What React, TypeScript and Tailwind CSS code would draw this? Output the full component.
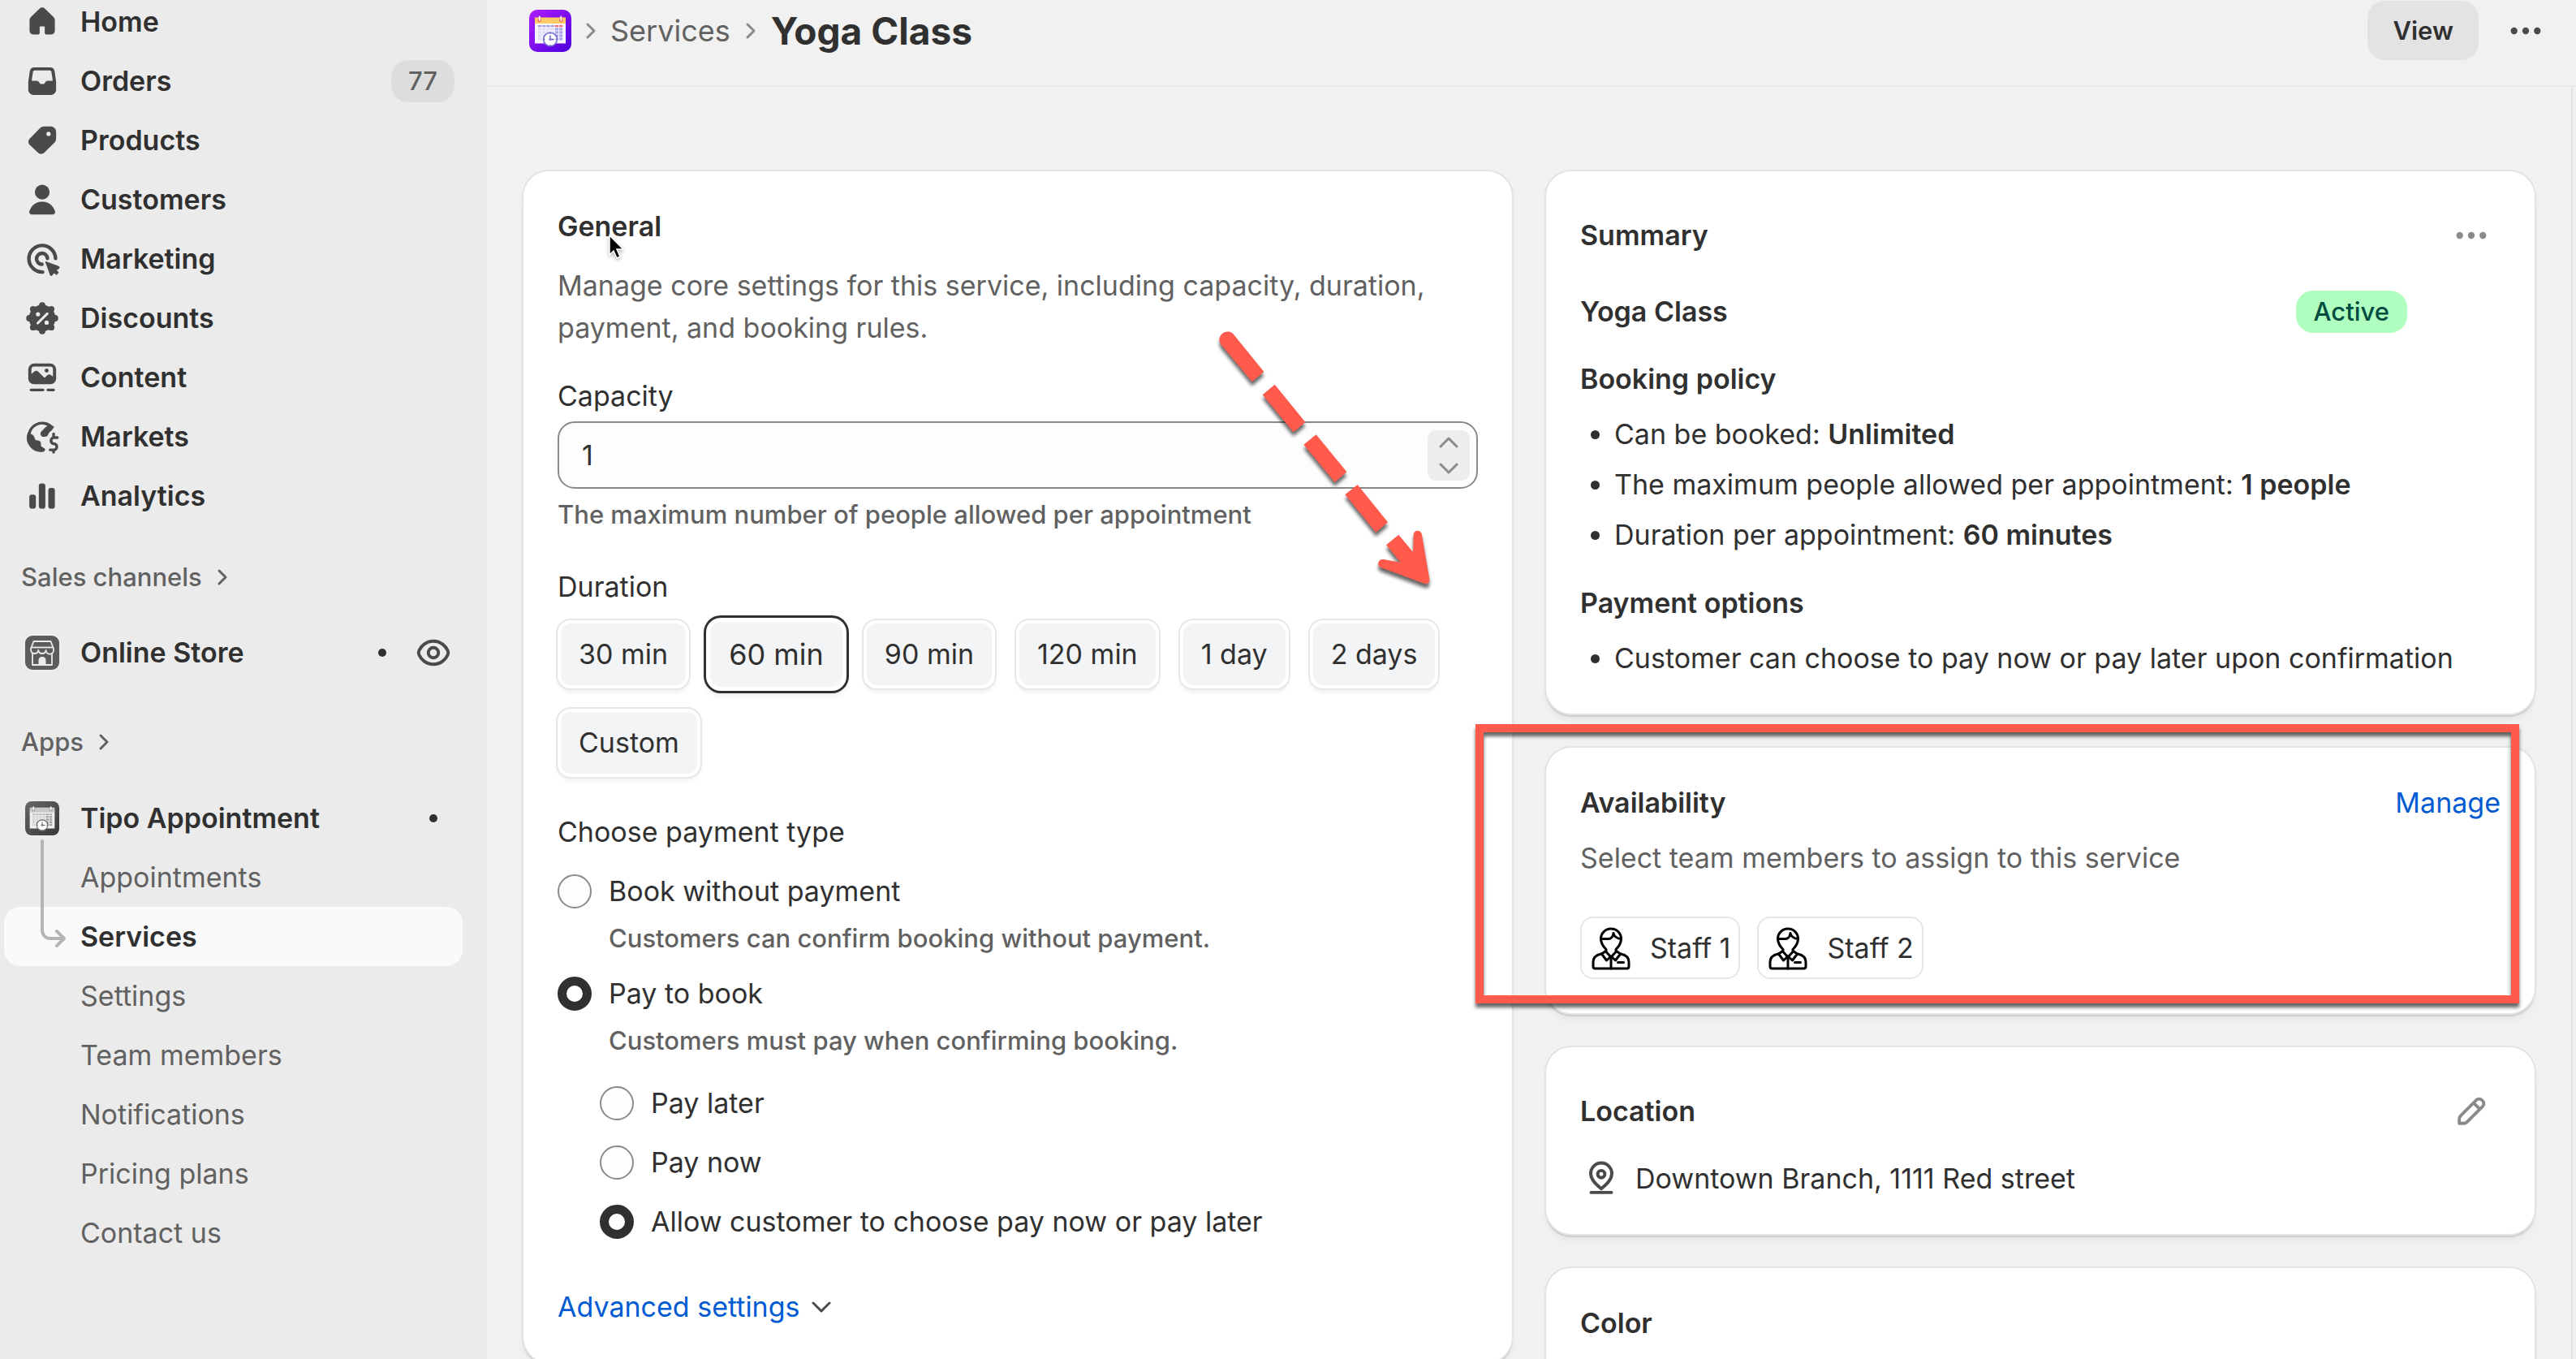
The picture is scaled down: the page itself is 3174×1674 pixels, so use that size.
import React, { useState } from 'react';

const DURATIONS = ['30 min', '60 min', '90 min', '120 min', '1 day', '2 days', 'Custom'];

const SUB_PAGES = [
  'Appointments',
  'Services',
  'Settings',
  'Team members',
  'Notifications',
  'Pricing plans',
  'Contact us',
];

type IconProps = { children: React.ReactNode; className?: string };

// All admin icons share a 20x20 grid
function Icon({ children, className = '' }: IconProps) {
  return (
    <svg viewBox="0 0 20 20" fill="currentColor" className={`size-[52px] shrink-0 ${className}`} aria-hidden="true">
      {children}
    </svg>
  );
}

function StrokeIcon({ children, className = '' }: IconProps) {
  return (
    <svg
      viewBox="0 0 20 20"
      fill="none"
      stroke="currentColor"
      strokeWidth="1.5"
      strokeLinecap="round"
      strokeLinejoin="round"
      className={`size-[52px] shrink-0 ${className}`}
      aria-hidden="true"
    >
      {children}
    </svg>
  );
}

function HomeIcon() {
  return (
    <Icon>
      <path d="M11.3 3.75a1.85 1.85 0 0 0-2.6 0L4.6 7.65A2 2 0 0 0 4 9.1v5a1.9 1.9 0 0 0 1.9 1.9h2.2a.7.7 0 0 0 .7-.7v-2.9a.3.3 0 0 1 .3-.3h1.8a.3.3 0 0 1 .3.3v2.9a.7.7 0 0 0 .7.7h2.2a1.9 1.9 0 0 0 1.9-1.9v-5a2 2 0 0 0-.6-1.45z" />
    </Icon>
  );
}

function OrdersIcon() {
  return (
    <Icon>
      <path
        fillRule="evenodd"
        d="M6.3 3.5h7.4a2.2 2.2 0 0 1 2.2 1.9l.7 5v3.6a2.5 2.5 0 0 1-2.5 2.5H5.9a2.5 2.5 0 0 1-2.5-2.5v-3.6l.7-5a2.2 2.2 0 0 1 2.2-1.9zM6.5 4.9h7a.9.9 0 0 1 .9.8l.6 4.1h-2.3c-.6 0-1 .3-1.2.7-.2.5-.5.8-.9.8H9.4c-.4 0-.7-.3-.9-.8-.2-.4-.6-.7-1.2-.7H5l.6-4.1a.9.9 0 0 1 .9-.8z"
      />
    </Icon>
  );
}

function ProductsIcon() {
  return (
    <Icon>
      <path
        fillRule="evenodd"
        d="M10.9 3.4h3.2a2.5 2.5 0 0 1 2.5 2.5v3.2a3 3 0 0 1-.9 2.1l-4.8 4.7a2 2 0 0 1-2.8 0L4 12a2 2 0 0 1 0-2.8l4.8-4.9a3 3 0 0 1 2.1-.9zM13 5.9a1 1 0 1 0 0 2 1 1 0 0 0 0-2z"
      />
    </Icon>
  );
}

function CustomersIcon() {
  return (
    <Icon>
      <circle cx="10" cy="6.4" r="3.5" />
      <path d="M10 11c-3 0-5.2 1.7-6.1 4.6A1.1 1.1 0 0 0 5 17h10a1.1 1.1 0 0 0 1.1-1.4C15.2 12.7 13 11 10 11z" />
    </Icon>
  );
}

function MarketingIcon() {
  return (
    <StrokeIcon>
      <path d="M10.2 16.2A6.3 6.3 0 1 1 16.3 9.7" strokeWidth="1.7" />
      <path d="M9.9 12.5A2.6 2.6 0 1 1 12.5 9.7" strokeWidth="1.7" />
      <path
        d="M11.7 11.4l6 2.2c.4.2.4.6.1.8l-1.3.9 1.1 1.1-.9.9-1.1-1.1-1 1.4c-.2.3-.6.2-.7-.1z"
        fill="currentColor"
        strokeWidth=".5"
      />
    </StrokeIcon>
  );
}

function DiscountsIcon() {
  const lobes = [
    [16.1, 10],
    [14.3, 14.3],
    [10, 16.1],
    [5.7, 14.3],
    [3.9, 10],
    [5.7, 5.7],
    [10, 3.9],
    [14.3, 5.7],
  ];
  return (
    <Icon>
      <circle cx="10" cy="10" r="6.3" />
      {lobes.map(([cx, cy]) => (
        <circle key={`${cx}-${cy}`} cx={cx} cy={cy} r="1.5" />
      ))}
      <g fill="#ebebeb">
        <circle cx="8" cy="8.1" r="1" />
        <circle cx="12.1" cy="12.1" r="1" />
        <path d="M7.9 12.3l4.5-4.5" stroke="#ebebeb" strokeWidth="1.2" strokeLinecap="round" />
      </g>
    </Icon>
  );
}

function ContentIcon() {
  return (
    <Icon>
      <path
        fillRule="evenodd"
        d="M6.1 3.4h7.8a2.7 2.7 0 0 1 2.7 2.7v4.4a2.7 2.7 0 0 1-2.7 2.7H6.1a2.7 2.7 0 0 1-2.7-2.7V6.1a2.7 2.7 0 0 1 2.7-2.7zM6.2 4.8a1.3 1.3 0 0 0-1.3 1.3v2.3l1.1-1a1.7 1.7 0 0 1 2.3 0l2.8 2.8 1.1-1.1a1.7 1.7 0 0 1 2.2-.1l.7.5V6.1a1.3 1.3 0 0 0-1.3-1.3z"
      />
      <circle cx="12.1" cy="6.7" r=".95" />
      <path d="M4.7 15.9h5.7M12.7 15.9h2.7" stroke="currentColor" strokeWidth="1.3" strokeLinecap="round" />
    </Icon>
  );
}

function MarketsIcon() {
  return (
    <Icon>
      <path d="M11.3 16A6.3 6.3 0 1 1 14.9 5.9" fill="none" stroke="currentColor" strokeWidth="1.3" />
      <path d="M3.2 7.9l1.9.9c.8.4 1.2 1.1 1.3 1.9.1.6.6 1 1.3 1 1 0 1.7.6 1.7 1.5v.8c0 .5.3.8.8.9.4.2.5.6.5 1l.2 1.1A6.7 6.7 0 0 1 3.2 7.9z" />
      <path d="M15.7 5.3c-1.3-1.2-3-1-3.9 0L9.6 7.5c-.8.8-.4 2.3.7 2.5h1.2c.9 0 1.3-.8 1.5-1.4.2-.7.8-1.1 1.4-1.5z" />
      <path
        d="M17.2 10.4h-1.9a1.5 1.5 0 0 0 0 2.9h.5a1.5 1.5 0 0 1 0 2.9h-2.1M15.4 8.6v1.6M15.4 16.4v.9"
        fill="none"
        stroke="currentColor"
        strokeWidth="1.3"
        strokeLinecap="round"
      />
    </Icon>
  );
}

function AnalyticsIcon() {
  return (
    <Icon>
      <rect x="3.9" y="9.3" width="3.1" height="6.7" rx="1.2" />
      <rect x="8.4" y="4" width="3.1" height="12" rx="1.2" />
      <rect x="12.9" y="6.2" width="3.1" height="9.8" rx="1.2" />
    </Icon>
  );
}

function StoreIcon() {
  return (
    <svg viewBox="0 0 42 42" className="size-[42px]" aria-hidden="true">
      <rect width="42" height="42" rx="9" fill="#5c5c5c" />
      <g fill="none" stroke="#ebebeb" strokeWidth="1.8" strokeLinejoin="round">
        <path d="M10.5 7h21l3.5 9v2a4.7 4.7 0 0 1-9.4 0 4.7 4.7 0 0 1-9.3 0 4.7 4.7 0 0 1-9.3 0v-2z" />
        <path d="M9 22v14h24V22" />
        <path d="M8 14.5h26" />
      </g>
      <path d="M16.5 35v-4.5a4.5 4.5 0 0 1 9 0V35z" fill="#ebebeb" />
    </svg>
  );
}

// Same artwork is used twice: in colour for the breadcrumb, greyed out in the sidebar
function AppLogo({ gray = false, className }: { gray?: boolean; className: string }) {
  const id = gray ? 'logo-gray' : 'logo-color';
  return (
    <svg viewBox="0 0 52 52" className={className} aria-hidden="true">
      <defs>
        <linearGradient id={id} x1="0" y1="0" x2="1" y2="1">
          <stop offset="0" stopColor={gray ? '#666666' : '#b01cff'} />
          <stop offset="1" stopColor={gray ? '#383838' : '#4a00dc'} />
        </linearGradient>
      </defs>
      <rect width="52" height="52" rx="10" fill={`url(#${id})`} />
      <path d="M7 14h38v27.5H7z" fill={gray ? '#f0f0f0' : '#f7f5ff'} />
      <path d="M7 9.5h38V17H7z" fill={gray ? '#c9c9c9' : '#ffcb66'} />
      {[12.7, 39.3].map(x => (
        <g key={x}>
          <circle cx={x} cy="13" r="2.2" fill={gray ? '#9a9a9a' : '#f2605c'} />
          <path d={`M${x} 8.5v4.5`} stroke="#ffffff" strokeWidth="1.8" strokeLinecap="round" />
        </g>
      ))}
      {[0, 1, 2, 3, 4].map(row =>
        [0, 1, 2, 3, 4, 5].map(col => {
          let fill = gray ? '#d5d5d5' : '#dedcf5';
          if (col > 3) fill = gray ? '#a5a5a5' : '#aaa6ea';
          if (row === 0) fill = gray ? '#b5b5b5' : '#a5a0e0';
          if (row === 0 && col > 3) fill = gray ? '#a0a0a0' : '#ef6a6f';
          return (
            <rect
              key={`${row}-${col}`}
              x={11 + col * 5.2}
              y={row === 0 ? 19 : 18.4 + row * 4}
              width="4.2"
              height={row === 0 ? 2.2 : 3.1}
              fill={fill}
            />
          );
        })
      )}
      <circle cx="26" cy="36.5" r="8.3" fill="#ffffff" stroke={gray ? '#707070' : '#6f6bd0'} strokeWidth="1.5" />
      <path
        d="M26 31.5v5h4.5M26 28.8v1M26 43.2v1M18.3 36.5h1M32.7 36.5h1"
        fill="none"
        stroke={gray ? '#606060' : '#4f4bb5'}
        strokeWidth="1.3"
      />
      <circle cx="26" cy="36.5" r="1.8" fill={gray ? '#808080' : '#8a86dc'} />
    </svg>
  );
}

function StaffIcon() {
  return (
    <svg
      viewBox="0 0 48 54"
      fill="none"
      stroke="#000000"
      strokeWidth="3"
      strokeLinejoin="round"
      strokeLinecap="round"
      className="h-[54px] w-12 shrink-0"
      aria-hidden="true"
    >
      <path d="M11.5 15.5a12.5 12.5 0 0 1 25 0c0 5-3.5 10-6.5 13v3l-6 6.5-6-6.5v-3c-3-3-6.5-8-6.5-13z" />
      <path d="M12 15.5h9c3 0 5.5-3 6-7 1 4 3.5 6.5 9 7" />
      <path d="M17.5 30.5l-5 3.5 6 8 5.5-5 5.5 5 6-8-5-3.5" />
      <path d="M12 34C5 35.5 2 38.5 2 44v5.5C2 51 3 52 4.5 52h39c1.5 0 2.5-1 2.5-2.5V44c0-5.5-3-8.5-10-10" />
      <path d="M24 38v14M32.5 44.5h7" />
    </svg>
  );
}

const NAV = [
  { label: 'Home', icon: HomeIcon },
  { label: 'Orders', icon: OrdersIcon, badge: '77' },
  { label: 'Products', icon: ProductsIcon },
  { label: 'Customers', icon: CustomersIcon },
  { label: 'Marketing', icon: MarketingIcon },
  { label: 'Discounts', icon: DiscountsIcon },
  { label: 'Content', icon: ContentIcon },
  { label: 'Markets', icon: MarketsIcon },
  { label: 'Analytics', icon: AnalyticsIcon },
];

function Dots({ className }: { className: string }) {
  return (
    <Icon className={className}>
      <circle cx="4.5" cy="10" r="1.6" />
      <circle cx="10" cy="10" r="1.6" />
      <circle cx="15.5" cy="10" r="1.6" />
    </Icon>
  );
}

function Chevron({ className }: { className: string }) {
  return (
    <svg viewBox="0 0 14 22" fill="none" stroke="currentColor" strokeWidth="3" strokeLinecap="round" strokeLinejoin="round" className={className} aria-hidden="true">
      <path d="M3 3l8 8-8 8" />
    </svg>
  );
}

function ChevronDown({ className }: { className: string }) {
  return (
    <svg viewBox="0 0 24 16" fill="none" stroke="currentColor" strokeWidth="3" strokeLinecap="round" strokeLinejoin="round" className={className} aria-hidden="true">
      <path d="M2 3l10 10L22 3" />
    </svg>
  );
}

function SectionLink({ label }: { label: string }) {
  return (
    <a href="#" className="flex h-[73px] items-center gap-[18px] pl-[26px] text-[31px] font-medium text-[#616161]">
      {label}
      <Chevron className="h-[22px] w-[14px]" />
    </a>
  );
}

function StatusDot() {
  return (
    <span className="flex size-[52px] items-center justify-center">
      <span className="size-[10px] rounded-full bg-[#303030]" />
    </span>
  );
}

function Sidebar() {
  return (
    <nav className="w-[600px] shrink-0 overflow-hidden bg-[#ebebeb]">
      <ul className="-mt-[10px]">
        {NAV.map(({ label, icon: NavIcon, badge }) => (
          <li key={label}>
            <a href="#" className="flex h-[73px] items-center pr-10 pl-[26px] font-semibold">
              <span className="text-[#4a4a4a]">
                <NavIcon />
              </span>
              <span className="ml-[21px] grow">{label}</span>
              {badge && (
                <span className="flex h-[52px] items-center rounded-[21px] bg-[#dddddd] px-[21px] text-[31px] font-medium text-[#616161]">
                  {badge}
                </span>
              )}
            </a>
          </li>
        ))}
      </ul>

      <div className="mt-[27px]">
        <SectionLink label="Sales channels" />
      </div>
      <div className="mt-5 flex h-[73px] items-center pr-10 pl-[26px] font-semibold">
        <a href="#" className="flex grow items-center">
          <span className="flex size-[52px] items-center justify-center">
            <StoreIcon />
          </span>
          <span className="ml-[21px]">Online Store</span>
        </a>
        <StatusDot />
        <button type="button" aria-label="View your online store" className="ml-[11px] text-[#4a4a4a]">
          <StrokeIcon>
            <path d="M10 4.5c-3.6 0-5.9 2.5-6.8 4.5a2.3 2.3 0 0 0 0 2c.9 2 3.2 4.5 6.8 4.5s5.9-2.5 6.8-4.5a2.3 2.3 0 0 0 0-2C15.9 7 13.6 4.5 10 4.5z" />
            <circle cx="10" cy="10" r="2.4" />
          </StrokeIcon>
        </button>
      </div>

      <div className="mt-[37px]">
        <SectionLink label="Apps" />
      </div>
      <div className="mt-[21px]">
        <a href="#" className="flex h-[73px] items-center pr-10 pl-[26px] font-semibold">
          <span className="flex size-[52px] items-center justify-center">
            <AppLogo gray className="size-[42px]" />
          </span>
          <span className="ml-[21px] grow">Tipo Appointment</span>
          <StatusDot />
        </a>
        <ul className="relative">
          {SUB_PAGES.map(page => (
            <li key={page} className="pr-[30px] pl-[5px]">
              <a
                href="#"
                className={
                  page === 'Services'
                    ? 'flex h-[73px] items-center rounded-[20px] bg-[#fafafa] pl-[94px] font-semibold'
                    : 'flex h-[73px] items-center pl-[94px] text-[#616161]'
                }
              >
                {page}
              </a>
            </li>
          ))}
          <li className="pointer-events-none absolute -top-3 left-11" aria-hidden="true">
            <svg viewBox="0 0 40 140" fill="none" stroke="#b5b5b5" strokeWidth="4" strokeLinecap="round" strokeLinejoin="round" className="h-[140px] w-10">
              <path d="M8 4v110a10 10 0 0 0 10 10h16M26 115l9 9-9 9" />
            </svg>
          </li>
        </ul>
      </div>
    </nav>
  );
}

function Card({ children, className = '' }: { children: React.ReactNode; className?: string }) {
  return (
    <section
      className={`relative rounded-[31px] bg-white p-[42px] shadow-[0_0_0_2px_#e3e3e3,0_3px_1px_1px_#cccccc,0_8px_10px_-2px_rgba(26,26,26,0.07)] ${className}`}
    >
      {children}
    </section>
  );
}

type RadioProps = {
  name: string;
  label: string;
  help?: string;
  checked: boolean;
  onChange: () => void;
};

function Radio({ name, label, help, checked, onChange }: RadioProps) {
  return (
    <div>
      <label className="flex items-center gap-[21px]">
        <input
          type="radio"
          name={name}
          checked={checked}
          onChange={onChange}
          className="size-[42px] appearance-none rounded-full border-2 border-[#8a8a8a] bg-[#fdfdfd] checked:border-[11px] checked:border-[#303030] checked:bg-white"
        />
        {label}
      </label>
      {help && <p className="mt-[6px] pl-[63px] text-[31px] font-[450] text-[#616161]">{help}</p>}
    </div>
  );
}

function Arrow() {
  return (
    <svg
      viewBox="0 0 1200 1080"
      className="pointer-events-none absolute top-[169px] right-[3px] h-[360px] w-[400px] drop-shadow-[0_5px_2px_rgba(0,0,0,0.6)]"
      fill="#ff5a4c"
      aria-hidden="true"
    >
      <path d="M133 133a29 29 0 0 1 49-35l110 136-44 37z" />
      <path d="M332 281l113 139-44 37-114-138z" />
      <path d="M485 466l113 138-44 38-115-139z" />
      <path d="M638 651l112 139-44 37-114-139z" />
      <path d="M790 836l53 64 2-64c1-20 29-20 31 0l28 166c1 12-8 18-18 15l-160-59c-20-8-12-34 8-31l63 11-53-64z" />
    </svg>
  );
}

function Cursor() {
  return (
    <svg viewBox="0 0 24 36" className="pointer-events-none absolute top-[77px] left-[103px] h-9 w-6 drop-shadow-[0_2px_2px_rgba(0,0,0,0.3)]" aria-hidden="true">
      <path d="M3 2v24l5-5 4 9 4-2-4-9h8z" fill="#000000" stroke="#ffffff" strokeWidth="1.5" />
    </svg>
  );
}

function GeneralCard() {
  const [capacity, setCapacity] = useState(1);
  const [duration, setDuration] = useState('60 min');
  const [payment, setPayment] = useState('book');
  const [option, setOption] = useState('choose');

  return (
    <Card>
      <h2 className="font-semibold">General</h2>
      <p className="mt-[21px] text-[#616161]">
        Manage core settings for this service, including capacity, duration, payment, and booking rules.
      </p>

      <label htmlFor="capacity" className="mt-8 block">
        Capacity
      </label>
      <div className="mt-[5px] flex h-[83px] items-center rounded-[21px] border-2 border-[#8a8a8a] bg-[#fdfdfd] pr-2 pl-7">
        <input
          id="capacity"
          type="text"
          inputMode="numeric"
          value={capacity}
          onChange={e => setCapacity(Number(e.target.value) || 0)}
          className="min-w-0 grow bg-transparent outline-none"
        />
        <div className="flex h-[62px] w-[52px] flex-col items-center justify-between rounded-[10px] bg-[#ededed] py-[7px] text-[#8a8a8a]">
          <button type="button" aria-label="Increase capacity" onClick={() => setCapacity(c => c + 1)}>
            <ChevronDown className="h-4 w-6 rotate-180" />
          </button>
          <button type="button" aria-label="Decrease capacity" onClick={() => setCapacity(c => Math.max(1, c - 1))}>
            <ChevronDown className="h-4 w-6" />
          </button>
        </div>
      </div>
      <p className="mt-[6px] text-[31px] font-[450] text-[#616161]">The maximum number of people allowed per appointment</p>

      <h3 className="mt-[37px]">Duration</h3>
      <div className="mt-[15px] flex flex-wrap gap-x-[26px] gap-y-[25px]">
        {DURATIONS.map(item => (
          <button
            key={item}
            type="button"
            onClick={() => setDuration(item)}
            className={
              item === duration
                ? '-mx-[5px] -my-[3px] h-[90px] rounded-[18px] border-[5px] border-white bg-[#f3f4f6] bg-clip-padding px-[23px] text-[36px] shadow-[0_0_0_3px_#303030,0_6px_6px_rgba(0,0,0,0.08)]'
                : 'h-[84px] rounded-[16px] border-4 border-white bg-[#f3f4f6] bg-clip-padding px-[22px] shadow-[0_0_0_2px_#e5e7eb,0_5px_5px_rgba(0,0,0,0.06)]'
            }
          >
            {item}
          </button>
        ))}
      </div>

      <fieldset className="mt-[42px]">
        <legend>Choose payment type</legend>
        <div className="mt-[21px] flex flex-col gap-4">
          <Radio
            name="payment"
            label="Book without payment"
            help="Customers can confirm booking without payment."
            checked={payment === 'free'}
            onChange={() => setPayment('free')}
          />
          <Radio
            name="payment"
            label="Pay to book"
            help="Customers must pay when confirming booking."
            checked={payment === 'book'}
            onChange={() => setPayment('book')}
          />
        </div>
        <div className="mt-[25px] flex flex-col gap-[21px] pl-[52px]">
          <Radio name="option" label="Pay later" checked={option === 'later'} onChange={() => setOption('later')} />
          <Radio name="option" label="Pay now" checked={option === 'now'} onChange={() => setOption('now')} />
          <Radio
            name="option"
            label="Allow customer to choose pay now or pay later"
            checked={option === 'choose'}
            onChange={() => setOption('choose')}
          />
        </div>
      </fieldset>

      <button type="button" className="mt-[53px] flex items-center gap-[14px] text-[#005bd3]">
        Advanced settings
        <ChevronDown className="h-4 w-6 text-[#4a4a4a]" />
      </button>

      <Cursor />
      <Arrow />
    </Card>
  );
}

function SummaryCard() {
  return (
    <Card>
      <div className="flex h-[73px] items-center justify-between">
        <h2 className="font-semibold">Summary</h2>
        <button type="button" aria-label="Summary actions" className="flex size-[73px] items-center justify-center">
          <Dots className="text-[#8a8a8a]" />
        </button>
      </div>
      <div className="mt-8 flex items-center justify-between pr-[115px]">
        <h3 className="font-semibold">Yoga Class</h3>
        <span className="flex h-[52px] items-center rounded-[21px] bg-[#affebf] px-[22px] text-[31px] font-medium text-[#014b40]">
          Active
        </span>
      </div>
      <h3 className="mt-[31px] font-semibold">Booking policy</h3>
      <ul className="mt-4 flex list-disc flex-col gap-[10px] pl-[42px]">
        <li>
          Can be booked: <b className="font-semibold">Unlimited</b>
        </li>
        <li>
          The maximum people allowed per appointment: <b className="font-semibold">1 people</b>
        </li>
        <li>
          Duration per appointment: <b className="font-semibold">60 minutes</b>
        </li>
      </ul>
      <h3 className="mt-8 font-semibold">Payment options</h3>
      <ul className="mt-4 list-disc pl-[42px]">
        <li>Customer can choose to pay now or pay later upon confirmation</li>
      </ul>
    </Card>
  );
}

function AvailabilityCard() {
  return (
    <Card>
      <div className="flex items-center justify-between">
        <h2 className="font-semibold">Availability</h2>
        <a href="#" className="text-[#005bd3]">
          Manage
        </a>
      </div>
      <p className="mt-4 text-[#616161]">Select team members to assign to this service</p>
      <ul className="mt-[46px] flex gap-[21px]">
        {['Staff 1', 'Staff 2'].map(name => (
          <li key={name} className="flex h-[77px] items-center gap-6 rounded-[16px] border-2 border-[#e5e5ea] pr-2.5 pl-3">
            <StaffIcon />
            {name}
          </li>
        ))}
      </ul>
      {/* callout box around the card */}
      <div className="pointer-events-none absolute -top-[29px] right-[19px] bottom-3 -left-[87px] border-[10px] border-[#ff5a4c] drop-shadow-[0_5px_2px_rgba(0,0,0,0.6)]" />
    </Card>
  );
}

function LocationCard() {
  return (
    <Card>
      <div className="flex h-[73px] items-center justify-between">
        <h2 className="font-semibold">Location</h2>
        <button type="button" aria-label="Edit location" className="flex size-[73px] items-center justify-center text-[#8a8a8a]">
          <StrokeIcon>
            <path d="M4.3 15.7v-2.1a2.2 2.2 0 0 1 .65-1.55l7.4-7.4a1.9 1.9 0 0 1 2.7 0l.3.3a1.9 1.9 0 0 1 0 2.7l-7.4 7.4a2.2 2.2 0 0 1-1.55.65zM11.3 6.2l2.7 2.7" />
          </StrokeIcon>
        </button>
      </div>
      <p className="mt-[21px] flex items-center gap-4">
        <StrokeIcon className="text-[#4a4a4a]">
          <path d="M10 14.7c-2.6-2.2-5-4.4-5-7.2a5 5 0 0 1 10 0c0 2.8-2.4 5-5 7.2z" />
          <circle cx="10" cy="7.8" r="1.7" />
          <path d="M5.2 16.5h9.6" />
        </StrokeIcon>
        Downtown Branch, 1111 Red street
      </p>
    </Card>
  );
}

function App() {
  return (
    <div className="flex h-screen overflow-hidden bg-[#f1f1f1] font-['Inter',sans-serif] text-[34px] leading-[52px] font-normal text-[#303030]">
      <Sidebar />

      <div className="flex min-w-0 grow flex-col">
        <header className="flex h-[107px] shrink-0 items-start justify-between border-b-2 border-[#eaeaea] pr-9 pl-[52px]">
          <div className="flex h-[75px] items-center">
            <AppLogo className="size-[52px]" />
            <Chevron className="mx-[17px] h-[22px] w-[14px] text-[#8a8a8a]" />
            <a href="#" className="text-[36px] text-[#616161]">
              Services
            </a>
            <Chevron className="mx-[18px] h-[22px] w-[14px] text-[#8a8a8a]" />
            <h1 className="text-[46px] font-[650]">Yoga Class</h1>
          </div>
          <div className="flex h-[75px] items-center gap-8">
            <button type="button" className="h-[73px] rounded-[21px] bg-[#e3e3e3] px-[31px] text-[31px] font-semibold">
              View
            </button>
            <button type="button" aria-label="More actions">
              <Dots className="text-[#4a4a4a]" />
            </button>
          </div>
        </header>

        <main className="mr-[4px] grid grow grid-cols-2 items-start gap-[42px] border-r-2 border-[#e3e3e3] pt-[104px] pr-[45px] pl-[45px]">
          <GeneralCard />
          <div className="flex flex-col gap-[42px]">
            <SummaryCard />
            <AvailabilityCard />
            <LocationCard />
            <Card className="min-h-[240px]">
              <h2 className="font-semibold">Color</h2>
            </Card>
          </div>
        </main>
      </div>
    </div>
  );
}

export default App;
